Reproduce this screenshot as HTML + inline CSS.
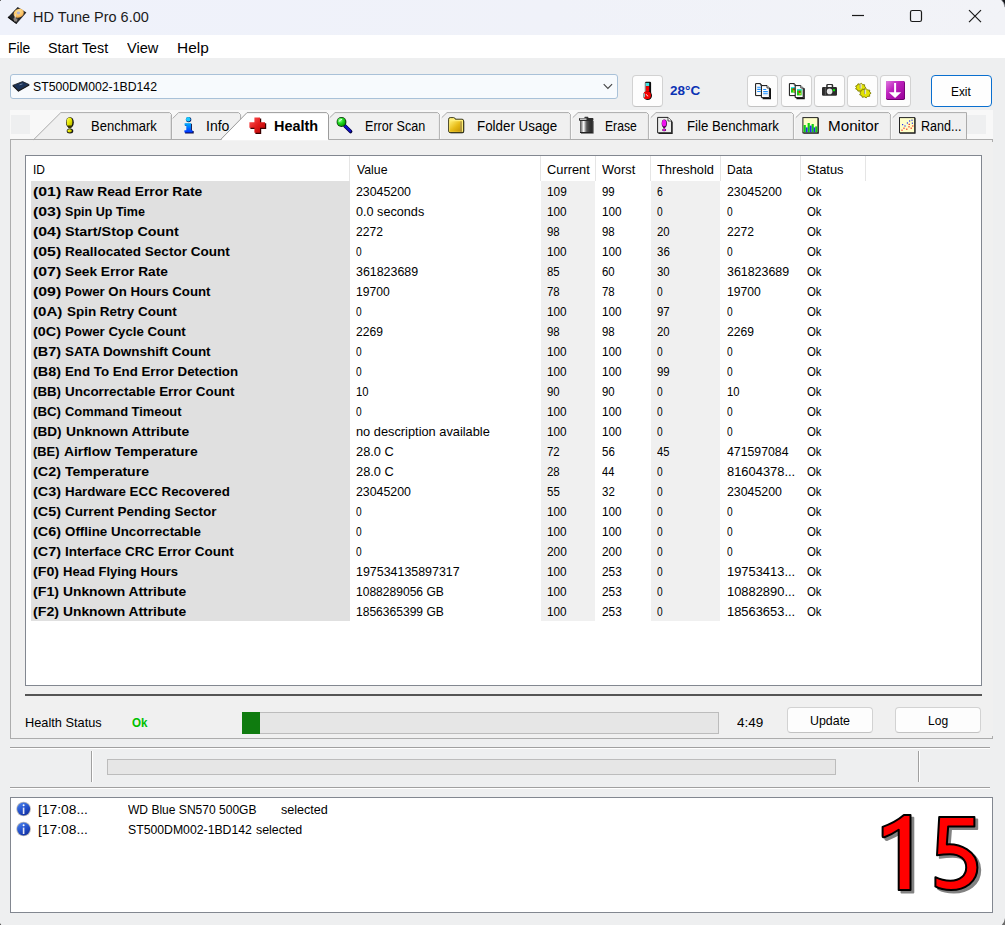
<!DOCTYPE html><html><head><meta charset="utf-8"><title>HD Tune Pro 6.00</title><style>
html,body{margin:0;padding:0}
body{width:1005px;height:925px;position:relative;overflow:hidden;background:#eeeff0;font-family:"Liberation Sans",sans-serif;color:#000}
.t{position:absolute;white-space:pre;line-height:20px;font-size:13px;transform-origin:0 0;display:block}
.s15{font-size:15px}.s14{font-size:14px}.b{font-weight:700}
.a{position:absolute;box-sizing:border-box}
.btn{position:absolute;box-sizing:border-box;background:#fdfdfd;border:1px solid #d2d2d2;border-bottom-color:#c2c2c2;border-radius:4px}
svg{position:absolute;overflow:visible}
</style></head><body>
<div class="a" style="left:0;top:0;width:1005px;height:35px;background:linear-gradient(90deg,#eff2fb 0%,#f0f2f9 55%,#f2f3f7 100%)"></div>
<div class="a" style="left:0;top:35px;width:1005px;height:23px;background:#fff"></div>
<svg style="left:985px;top:0" width="20" height="12" viewBox="0 0 20 12"><path d="M16.6 0Q19.3 2.4 20 7.2V0Z" fill="#14161a"/><path d="M16.6 0Q19.3 2.4 20 7.2" fill="none" stroke="#8a8c92" stroke-width="0.8"/></svg>
<div class="a" style="left:0;top:0;width:1px;height:1px;background:#666"></div>
<svg style="left:0;top:915px" width="8" height="10" viewBox="0 0 8 10"><path d="M0 8.2Q0.9 8.6 1.2 10H0Z" fill="#555"/></svg>
<svg style="left:995px;top:913px" width="10" height="12" viewBox="0 0 10 12"><path d="M10 5Q9.4 9.6 6.8 12H10Z" fill="#6a6a6a"/></svg>
<svg style="left:845px;top:0" width="160" height="35" viewBox="0 0 160 35"><g fill="none" stroke="#1a1a1a" stroke-width="1.2"><path d="M7 15.5H19"/><rect x="65.5" y="10.5" width="11" height="11" rx="1.8"/><path d="M124 10.2L136 22.2M136 10.2L124 22.2"/></g></svg>
<div class="a" style="left:10px;top:74px;width:608px;height:25px;background:#f7fafd;border:1px solid #a9c1d8;border-radius:3px"></div>
<svg style="left:603px;top:83px" width="10" height="7" viewBox="0 0 10 7"><path d="M0.7 1.2L4.9 5.4L9.1 1.2" fill="none" stroke="#444" stroke-width="1.1"/></svg>
<div class="btn" style="left:632px;top:75px;width:31px;height:32px"></div>
<div class="btn" style="left:747px;top:75px;width:31px;height:32px"></div>
<div class="btn" style="left:781px;top:75px;width:31px;height:32px"></div>
<div class="btn" style="left:814px;top:75px;width:31px;height:32px"></div>
<div class="btn" style="left:847px;top:75px;width:31px;height:32px"></div>
<div class="btn" style="left:880px;top:75px;width:31px;height:32px"></div>
<div class="btn" style="left:931px;top:75px;width:61px;height:32px;border-color:#0a6fcf;background:#fefefe"></div>
<div class="a" style="left:10px;top:110px;width:983px;height:29px;background:#f8f8f8"></div>
<div class="a" style="left:11px;top:115px;width:19px;height:19px;background:#eeeff0"></div>
<div class="a" style="left:967px;top:115px;width:19px;height:19px;background:#eeeff0"></div>
<div class="a" style="left:10px;top:139px;width:983px;height:600px;border:1px solid #acacac;border-right:none;background:#f0f0f0"></div>
<div class="a" style="left:992px;top:736px;width:1px;height:3px;background:#acacac"></div>
<div class="a" style="left:992px;top:139px;width:1px;height:3px;background:#acacac"></div>
<svg width="0" height="0" style="left:0;top:0"><defs>
<radialGradient id="gPlat" cx="0.55" cy="0.35" r="0.7"><stop offset="0" stop-color="#ffe796"/><stop offset="0.6" stop-color="#fbc468"/><stop offset="1" stop-color="#e89a3c"/></radialGradient>
<linearGradient id="gYel" x1="0" y1="0" x2="1" y2="1"><stop offset="0" stop-color="#ffff66"/><stop offset="0.5" stop-color="#e6e600"/><stop offset="1" stop-color="#a8a800"/></linearGradient>
<linearGradient id="gBlue" x1="0" y1="0" x2="0" y2="1"><stop offset="0" stop-color="#00b0ff"/><stop offset="1" stop-color="#0030ff"/></linearGradient>
<linearGradient id="gRed" x1="0" y1="0" x2="1" y2="1"><stop offset="0" stop-color="#ff5a5a"/><stop offset="0.5" stop-color="#e31b1b"/><stop offset="1" stop-color="#b00000"/></linearGradient>
<radialGradient id="gGreen" cx="0.35" cy="0.3" r="0.8"><stop offset="0" stop-color="#a0ffa0"/><stop offset="0.45" stop-color="#22dd22"/><stop offset="1" stop-color="#009000"/></radialGradient>
<linearGradient id="gFold" x1="0" y1="0" x2="1" y2="1"><stop offset="0" stop-color="#ffee70"/><stop offset="0.5" stop-color="#e8bc18"/><stop offset="1" stop-color="#c09000"/></linearGradient>
<linearGradient id="gCan" x1="0" y1="0" x2="1" y2="0"><stop offset="0" stop-color="#4a4a4a"/><stop offset="0.14" stop-color="#9a9a9a"/><stop offset="0.3" stop-color="#ffffff"/><stop offset="0.42" stop-color="#a0a0a0"/><stop offset="0.55" stop-color="#555"/><stop offset="0.8" stop-color="#333"/><stop offset="1" stop-color="#2a2a2a"/></linearGradient>
<linearGradient id="gPur" x1="0" y1="0" x2="1" y2="1"><stop offset="0" stop-color="#e07ae0"/><stop offset="0.4" stop-color="#bd22bd"/><stop offset="1" stop-color="#9a009a"/></linearGradient>
<linearGradient id="gInfo" x1="0.2" y1="0" x2="0.8" y2="1"><stop offset="0" stop-color="#4a80ea"/><stop offset="0.5" stop-color="#2452cc"/><stop offset="1" stop-color="#102c9c"/></linearGradient>
</defs></svg><svg style="left:0px;top:105px" width="1005" height="40" viewBox="0 0 1005 40"><path d="M221 35.2L247 8.5H326.5L328.5 10.5V35.2Z" fill="#fff"/><path d="M33.9 34L60.8 8H169.5L171.5 10V34Z" fill="#f0f0f0"/><path d="M172.5 34V14L179 8H238.5L240.8 10.2V14.5L221.3 34Z" fill="#f0f0f0"/><path d="M329 34V13L335 8H437.5L439.5 10V34Z" fill="#f0f0f0"/><path d="M441 34V13L447 8H568.5L570.5 10V34Z" fill="#f0f0f0"/><path d="M572 34V13L578 8H646.5L648.5 10V34Z" fill="#f0f0f0"/><path d="M650 34V13L656 8H791.5L793.5 10V34Z" fill="#f0f0f0"/><path d="M795 34V13L801 8H888.5L890.5 10V34Z" fill="#f0f0f0"/><path d="M892 34V13L898 8H967V34Z" fill="#f0f0f0"/><path d="M33.7 34.6L60.8 7.6H169.6L171.5 9.5V34" fill="none" stroke="#ababab" stroke-width="1"/><path d="M172.6 13.5L178.6 7.6H238.6L240.6 9.6V14.4" fill="none" stroke="#ababab" stroke-width="1"/><path d="M220.6 34.6L247 7.6H326.4L328.5 9.7V34.5" fill="none" stroke="#9c9c9c" stroke-width="1"/><path d="M329.8 12.6L335 7.6H437.6L439.5 9.5V34" fill="none" stroke="#ababab" stroke-width="1"/><path d="M441.8 12.6L447 7.6H568.6L570.5 9.5V34" fill="none" stroke="#ababab" stroke-width="1"/><path d="M572.8 12.6L578 7.6H646.6L648.5 9.5V34" fill="none" stroke="#ababab" stroke-width="1"/><path d="M650.8 12.6L656 7.6H791.6L793.5 9.5V34" fill="none" stroke="#ababab" stroke-width="1"/><path d="M795.8 12.6L801 7.6H888.6L890.5 9.5V34" fill="none" stroke="#ababab" stroke-width="1"/><path d="M892.8 12.6L898 7.6H966.5V34" fill="none" stroke="#ababab" stroke-width="1"/><path d="M170.8 10.4V34" stroke="#c4c4c4" stroke-width="0.6"/><path d="M439.3 10.4V34" stroke="#c4c4c4" stroke-width="0.6"/><path d="M570.3 10.4V34" stroke="#c4c4c4" stroke-width="0.6"/><path d="M648.3 10.4V34" stroke="#c4c4c4" stroke-width="0.6"/><path d="M793.3 10.4V34" stroke="#c4c4c4" stroke-width="0.6"/><path d="M890.3 10.4V34" stroke="#c4c4c4" stroke-width="0.6"/></svg>
<div class="a" style="left:25px;top:155px;width:957px;height:531px;border:1px solid #828790;background:#fff"></div>
<div class="a" style="left:31px;top:181px;width:319px;height:440px;background:#e0e0e0"></div>
<div class="a" style="left:541px;top:181px;width:54px;height:440px;background:#f0f0f0"></div>
<div class="a" style="left:651px;top:181px;width:69px;height:440px;background:#f0f0f0"></div>
<div class="a" style="left:349px;top:156px;width:1px;height:25px;background:#e5e5e5"></div>
<div class="a" style="left:540px;top:156px;width:1px;height:25px;background:#e5e5e5"></div>
<div class="a" style="left:595px;top:156px;width:1px;height:25px;background:#e5e5e5"></div>
<div class="a" style="left:650px;top:156px;width:1px;height:25px;background:#e5e5e5"></div>
<div class="a" style="left:720px;top:156px;width:1px;height:25px;background:#e5e5e5"></div>
<div class="a" style="left:800px;top:156px;width:1px;height:25px;background:#e5e5e5"></div>
<div class="a" style="left:865px;top:156px;width:1px;height:25px;background:#e5e5e5"></div>
<div class="a" style="left:25px;top:694px;width:957px;height:2px;background:#555"></div>
<div class="a" style="left:242px;top:712px;width:477px;height:22px;background:#e6e6e6;border:1px solid #bcbcbc"></div>
<div class="a" style="left:242px;top:712px;width:18px;height:22px;background:#0f7b0f"></div>
<div class="btn" style="left:787px;top:707px;width:86px;height:26px"></div>
<div class="btn" style="left:895px;top:707px;width:86px;height:26px"></div>
<div class="a" style="left:10px;top:747px;width:980px;height:2px;background:#fff;border-top:1px solid #a0a0a0"></div>
<div class="a" style="left:10px;top:787px;width:980px;height:2px;background:#fff;border-top:1px solid #a0a0a0"></div>
<div class="a" style="left:91px;top:751px;width:2px;height:31px;background:#fff;border-left:1px solid #a0a0a0"></div>
<div class="a" style="left:918px;top:751px;width:2px;height:31px;background:#fff;border-left:1px solid #a0a0a0"></div>
<div class="a" style="left:107px;top:759px;width:729px;height:16px;background:#e6e6e6;border:1px solid #bcbcbc"></div>
<div class="a" style="left:10px;top:797px;width:983px;height:116px;border:1px solid #828790;background:#fff"></div>
<svg style="left:0px;top:0px" width="40" height="35" viewBox="0 0 40 35">
<polygon points="17.7,7.0 26.4,12.6 16.4,24.1 7.7,17.4" fill="#26282b"/>
<polygon points="7.7,17.4 16.4,24.1 16.6,23.0 8.6,16.6" fill="#111"/>
<ellipse cx="18.7" cy="13.3" rx="5.3" ry="4.3" transform="rotate(-28 18.7 13.3)" fill="url(#gPlat)"/>
<ellipse cx="18.4" cy="13.0" rx="1.7" ry="1.4" fill="#b4b2cc"/>
<path d="M15.4 14.2L15.0 19.2" stroke="#e8e0d0" stroke-width="1"/>
<path d="M13.2 18.6L17.6 18.6L17.0 21.4L14.4 21.4Z" fill="#8e857f"/>
</svg><svg style="left:0px;top:70px" width="40" height="30" viewBox="0 0 40 30">
<polygon points="12.8,15.4 22.6,11.6 29.2,14.6 18.4,20.8" fill="#1b3358" stroke="#20242a" stroke-width="0.9" stroke-linejoin="round"/>
<path d="M12.8 15.6L18.4 21.0L29.2 14.9" fill="none" stroke="#17191c" stroke-width="1.2"/>
<path d="M19.5 14.8L22.5 13.9" stroke="#8fa0bb" stroke-width="0.7"/>
</svg><svg style="left:632px;top:75px" width="31" height="32" viewBox="0 0 31 32">
<rect x="12.9" y="6.8" width="6.2" height="14" rx="1.2" fill="#0c0c0c"/>
<rect x="12.9" y="7.6" width="1" height="11" fill="#9a9a9a"/>
<rect x="13.9" y="7.9" width="3.3" height="3.2" fill="#3ee4e4"/>
<rect x="13.9" y="11.1" width="3.3" height="9" fill="#f40000"/>
<circle cx="15.7" cy="20.6" r="4.3" fill="#0c0c0c"/>
<circle cx="15.1" cy="20.2" r="3.9" fill="#f20000"/>
<rect x="11.2" y="18.4" width="1.6" height="3.8" fill="#7aeaea"/>
<rect x="11.0" y="18.2" width="0.7" height="4.4" fill="#888"/>
<path d="M14.2 19.2Q14.6 20.9 16.2 21.1" fill="none" stroke="#fff" stroke-width="0.9"/>
</svg><svg style="left:747px;top:75px" width="31" height="32" viewBox="0 0 31 32"><path d="M8.6 8.6H13.4L15.0 10.2V20.6H8.6Z" fill="#fdfdfd" stroke="#111" stroke-width="1" stroke-linejoin="miter"/><path d="M13.4 8.6V10.2H15.0" fill="#fff" stroke="#111" stroke-width="0.8"/><path d="M23.299999999999997 13.2V23.5H15.6" fill="none" stroke="#111" stroke-width="1.4"/><path d="M14.4 10.6H20.0L22.4 13.0V22.6H14.4Z" fill="#fdfdfd" stroke="#111" stroke-width="1" stroke-linejoin="miter"/><path d="M20.0 10.6V13.0H22.4" fill="#fff" stroke="#111" stroke-width="0.8"/><g stroke="#1e90ff" stroke-width="1.1"><path d="M10.2 12.3H13.8M10.2 14.4H13.8M10.2 16.5H13.8"/><path d="M16.2 14.5H19.2M16.2 16.6H20.8M16.2 18.7H20.8"/></g><g stroke="#e4e4e4" stroke-width="0.6"><path d="M16.2 20.6H20.8"/></g></svg><svg style="left:781px;top:75px" width="31" height="32" viewBox="0 0 31 32"><path d="M8.4 8.6H13.200000000000001L14.8 10.2V20.6H8.4Z" fill="#fdfdfd" stroke="#111" stroke-width="1" stroke-linejoin="miter"/><path d="M13.200000000000001 8.6V10.2H14.8" fill="#fff" stroke="#111" stroke-width="0.8"/><rect x="10.0" y="12.0" width="4.6" height="5.6" fill="#18d018"/><rect x="10.0" y="12.0" width="4.6" height="1.2" fill="#30d8f0"/><circle cx="12.53" cy="14.352" r="1" fill="#e81010"/><rect x="12.3" y="15.36" width="1.6" height="1.6" fill="#e8d020"/><path d="M23.099999999999998 13.2V23.5H15.399999999999999" fill="none" stroke="#111" stroke-width="1.4"/><path d="M14.2 10.6H19.8L22.2 13.0V22.6H14.2Z" fill="#fdfdfd" stroke="#111" stroke-width="1" stroke-linejoin="miter"/><path d="M19.8 10.6V13.0H22.2" fill="#fff" stroke="#111" stroke-width="0.8"/><rect x="16.0" y="14.2" width="4.6" height="6.2" fill="#18d018"/><rect x="16.0" y="14.2" width="4.6" height="1.2" fill="#30d8f0"/><circle cx="18.53" cy="16.804" r="1" fill="#e81010"/><rect x="18.3" y="17.919999999999998" width="1.6" height="1.6" fill="#e8d020"/></svg><svg style="left:814px;top:75px" width="31" height="32" viewBox="0 0 31 32">
<rect x="12.2" y="9" width="7" height="4" rx="1.4" fill="#2c2c2c"/>
<rect x="13.6" y="10" width="4.2" height="2.2" rx="0.8" fill="#fafafa"/>
<rect x="8" y="12" width="15" height="8.8" rx="1.2" fill="#2b2b2b"/>
<rect x="10.9" y="12.4" width="0.7" height="8" fill="#6a6a6a"/>
<circle cx="15.6" cy="16.4" r="2.8" fill="#e9e9e9"/>
<rect x="18.9" y="14.1" width="2.1" height="2.1" fill="#00e400"/>
</svg><svg style="left:847px;top:75px" width="31" height="32" viewBox="0 0 31 32"><polygon points="18.90,12.50 17.48,13.63 17.66,15.23 15.67,15.36 14.52,16.68 12.88,15.76 10.95,16.17 10.43,14.63 8.62,13.95 9.47,12.50 8.62,11.05 10.43,10.37 10.95,8.83 12.88,9.24 14.52,8.32 15.67,9.64 17.66,9.77 17.48,11.37" fill="#e2e200" stroke="#7c7c00" stroke-width="0.9" stroke-linejoin="round"/><rect x="12.7" y="8.9" width="1.0" height="4.6" fill="#8a8abc"/><rect x="13.7" y="8.9" width="0.8" height="4.6" fill="#f4f4ff"/><polygon points="24.10,18.20 22.52,19.46 22.72,21.23 20.50,21.39 19.22,22.85 17.40,21.83 15.25,22.29 14.67,20.57 12.66,19.81 13.60,18.20 12.66,16.59 14.67,15.83 15.25,14.11 17.40,14.57 19.22,13.55 20.50,15.01 22.72,15.17 22.52,16.94" fill="#e2e200" stroke="#7c7c00" stroke-width="0.9" stroke-linejoin="round"/><rect x="17.3" y="14.6" width="1.0" height="4.6" fill="#8a8abc"/><rect x="18.3" y="14.6" width="0.8" height="4.6" fill="#f4f4ff"/></svg><svg style="left:880px;top:75px" width="31" height="32" viewBox="0 0 31 32">
<rect x="6" y="5.9" width="19" height="19" rx="1.6" fill="#6a006a"/>
<rect x="6" y="5.9" width="18.2" height="18.2" rx="1.4" fill="url(#gPur)"/>
<path d="M14.1 8H16.1V17.3H21.2L15.1 23.1L8.8 17.3H14.1Z" fill="#fff"/>
</svg><svg style="left:0px;top:105px" width="1005" height="40" viewBox="0 0 1005 40"><g><ellipse cx="69.9" cy="17.4" rx="3.9" ry="5.5" fill="#161616"/><ellipse cx="69.5" cy="17.1" rx="2.9" ry="4.5" fill="url(#gYel)"/>
<path d="M67.6 20.5L71.9 20.5L71.2 23.2L68.4 23.2Z" fill="#3a3a00"/>
<ellipse cx="70.0" cy="26.1" rx="3.3" ry="2.5" fill="#161616"/><ellipse cx="69.6" cy="25.8" rx="2.3" ry="1.6" fill="url(#gYel)"/></g><g><circle cx="188.6" cy="14.6" r="2.7" fill="#0a1a60"/><circle cx="188.2" cy="14.3" r="2.3" fill="#19c8ff"/>
<path d="M184.6 18.2H191.2V25.4H193V27.9H184.4V25.4H186.3V20.6H184.6Z" fill="#0a0a40" transform="translate(0.7,0.5)"/>
<path d="M184.6 18.2H191.0V25.2H192.6V27.5H184.4V25.2H186.3V20.4H184.6Z" fill="url(#gBlue)"/></g><g><path d="M254.6 12.6H260.4V17.4H265.4V23.2H260.4V28.2H254.6V23.2H249.6V17.4H254.6Z" fill="#3a0000" transform="translate(0.8,0.8)"/>
<path d="M254.4 12.4H260V17.2H265V22.8H260V27.8H254.4V22.8H249.4V17.2H254.4Z" fill="url(#gRed)"/></g><g><path d="M345 21L350.6 26.6" stroke="#000040" stroke-width="3.6" stroke-linecap="round"/><path d="M344.8 20.6L350.2 26" stroke="#1010c8" stroke-width="2.2" stroke-linecap="round"/>
<circle cx="341.5" cy="17" r="4.9" fill="#0c300c"/><circle cx="341.4" cy="16.9" r="4.1" fill="url(#gGreen)"/><path d="M339.2 16.6Q339.8 14.6 342 14.2" stroke="#eaffea" stroke-width="1" fill="none"/></g><g><path d="M448.6 14.2Q448.6 12.6 450.2 12.6H453.6Q455 12.6 455.4 14.2H462Q463.6 14.2 463.6 15.8V26Q463.6 27.6 462 27.6H450.2Q448.6 27.6 448.6 26Z" fill="#222" transform="translate(0.6,0.6)"/>
<path d="M448.6 14.2Q448.6 12.6 450.2 12.6H453.6Q455 12.6 455.4 14.2H462Q463.6 14.2 463.6 15.8V26Q463.6 27.6 462 27.6H450.2Q448.6 27.6 448.6 26Z" fill="#ffef78" stroke="#2a2a10" stroke-width="0.9"/>
<rect x="449.6" y="16.2" width="12.4" height="10.6" fill="url(#gFold)"/><rect x="460.6" y="16.2" width="0.8" height="10.6" fill="#8a8a8a"/></g><g><rect x="581" y="16" width="12.6" height="12.6" fill="#222" opacity="0.85"/>
<rect x="580" y="15.6" width="12.4" height="12.2" fill="url(#gCan)"/>
<rect x="584.4" y="11.8" width="4" height="1.6" rx="0.6" fill="#333"/>
<rect x="579" y="12.9" width="14.4" height="3" rx="0.8" fill="#2c2c2c"/><rect x="580" y="13.5" width="6.5" height="1.3" fill="#e4e4e4"/>
<rect x="580" y="27" width="12.4" height="1" fill="#222"/></g><g><path d="M658 12.8H668.4L672.2 16.4V28.4H658Z" fill="#222" transform="translate(0.5,0.5)"/>
<path d="M657.6 12.4H668L671.6 16V27.8H657.6Z" fill="#ececec" stroke="#222" stroke-width="1"/><path d="M668 12.4V16H671.6" fill="#fff" stroke="#222" stroke-width="0.8"/>
<ellipse cx="664.3" cy="18.4" rx="2.6" ry="3.9" fill="#380038"/><ellipse cx="664.1" cy="18.2" rx="2.1" ry="3.4" fill="#ee10ee"/>
<path d="M662.9 21.4H665.5L665 23.4H663.4Z" fill="#500050"/>
<ellipse cx="664.2" cy="25" rx="2" ry="1.3" fill="#380038"/><ellipse cx="664.1" cy="24.9" rx="1.5" ry="0.9" fill="#ee10ee"/></g><g><rect x="802.9" y="12.6" width="15.4" height="15.6" fill="#222" transform="translate(0.5,0.5)"/><rect x="802.9" y="12.6" width="15" height="15.2" fill="#ffffc8" stroke="#222" stroke-width="1"/>
<g fill="#10d010"><rect x="803.6" y="20" width="2.2" height="7.2"/><rect x="807.6" y="18" width="2.2" height="9.2"/><rect x="811.6" y="19" width="2.2" height="8.2"/><rect x="815.2" y="21.4" width="2" height="5.8"/></g>
<g fill="#2030e0"><rect x="805.8" y="22.4" width="1.8" height="4.8"/><rect x="809.8" y="20.6" width="1.8" height="6.6"/><rect x="813.6" y="22.4" width="1.6" height="4.8"/></g></g><g><rect x="899.5" y="12.6" width="15.6" height="15.6" fill="#222" transform="translate(0.5,0.5)"/><rect x="899.5" y="12.6" width="15.2" height="15.2" fill="#ffffc8" stroke="#222" stroke-width="1"/>
<g fill="#2030f0"><rect x="909" y="15.4" width="1.2" height="1.2"/><rect x="911.4" y="14.6" width="1.2" height="1.2"/><rect x="906.8" y="17.4" width="1.2" height="1.2"/><rect x="902" y="19" width="1.2" height="1.2"/><rect x="904.4" y="20.4" width="1.2" height="1.2"/><rect x="911.8" y="17.6" width="1.2" height="1.2"/></g>
<g fill="#f01010"><rect x="901.4" y="24.6" width="1.2" height="1.2"/><rect x="903.4" y="22.6" width="1.2" height="1.2"/><rect x="906.2" y="23.6" width="1.2" height="1.2"/><rect x="908.4" y="21.2" width="1.2" height="1.2"/><rect x="910.6" y="22.6" width="1.2" height="1.2"/><rect x="912.2" y="20.4" width="1.2" height="1.2"/><rect x="908.6" y="18.8" width="1.2" height="1.2"/></g></g></svg><svg style="left:15px;top:800px" width="18" height="18" viewBox="0 0 18 18"><circle cx="8.6" cy="9" r="7.3" fill="#b9b9b9"/><circle cx="8.6" cy="9" r="6.5" fill="url(#gInfo)"/>
<circle cx="8.6" cy="5.2" r="1" fill="#fff"/><rect x="7.8" y="7.6" width="1.6" height="6.4" fill="#e9e9f4"/></svg><svg style="left:15px;top:820px" width="18" height="18" viewBox="0 0 18 18"><circle cx="8.6" cy="9" r="7.3" fill="#b9b9b9"/><circle cx="8.6" cy="9" r="6.5" fill="url(#gInfo)"/>
<circle cx="8.6" cy="5.2" r="1" fill="#fff"/><rect x="7.8" y="7.6" width="1.6" height="6.4" fill="#e9e9f4"/></svg><svg style="left:870px;top:805px" width="125" height="100" viewBox="870 805 125 100"><g transform="translate(2.8,2.6)" fill="#828282" stroke="#828282" stroke-width="2" stroke-linejoin="round"><path d="M882.6 826.9Q895.2 822.6 903.9 815.1H910.5V890H898.7V829.8Q892.4 834.2 884.4 837.3Q882.6 837.6 882.6 836Z"/><path d="M939.2 817H974.4V826.4H948.2L946.8 844.4C960 843.6 977.4 851 977.4 867.5C977.4 882 965 890 951 890C944.5 890 939 888.6 935.4 886.4V877.2C940 879.6 945.5 880.8 950.5 880.8C960 880.8 966.2 875.4 966.2 867.5C966.2 859.5 960 854.2 950 854.2C945.5 854.2 941 854.6 937 855.2Z"/></g><g fill="#ff0000" stroke="#000" stroke-width="2" stroke-linejoin="round"><path d="M882.6 826.9Q895.2 822.6 903.9 815.1H910.5V890H898.7V829.8Q892.4 834.2 884.4 837.3Q882.6 837.6 882.6 836Z"/><path d="M939.2 817H974.4V826.4H948.2L946.8 844.4C960 843.6 977.4 851 977.4 867.5C977.4 882 965 890 951 890C944.5 890 939 888.6 935.4 886.4V877.2C940 879.6 945.5 880.8 950.5 880.8C960 880.8 966.2 875.4 966.2 867.5C966.2 859.5 960 854.2 950 854.2C945.5 854.2 941 854.6 937 855.2Z"/></g></svg>
<span class="t s15" style="left:33.35px;top:7px;transform:scaleX(0.9641);color:#1b1b1b">HD Tune Pro 6.00</span>
<span class="t s15" style="left:8.01px;top:38px;transform:scaleX(0.9196)">File</span>
<span class="t s15" style="left:47.96px;top:38px;transform:scaleX(0.9535)">Start Test</span>
<span class="t s15" style="left:127.26px;top:38px;transform:scaleX(0.9718)">View</span>
<span class="t s15" style="left:177.37px;top:38px;transform:scaleX(1.0277)">Help</span>
<span class="t" style="left:33px;top:77px;transform:scaleX(0.9428)">ST500DM002-1BD142</span>
<span class="t b" style="left:670.08px;top:81px;transform:scaleX(1.0372);color:#0a32b4">28°C</span>
<span class="t" style="left:951.37px;top:82px;transform:scaleX(0.9135)">Exit</span>
<span class="t s14" style="left:91.04px;top:116px;transform:scaleX(0.9300)">Benchmark</span>
<span class="t s14" style="left:206.24px;top:116px;transform:scaleX(1.0018)">Info</span>
<span class="t s14 b" style="left:274.02px;top:116px;transform:scaleX(1.0317)">Health</span>
<span class="t s14" style="left:365.08px;top:116px;transform:scaleX(0.9003)">Error Scan</span>
<span class="t s14" style="left:477.21px;top:116px;transform:scaleX(0.9547)">Folder Usage</span>
<span class="t s14" style="left:605.12px;top:116px;transform:scaleX(0.8690)">Erase</span>
<span class="t s14" style="left:687.12px;top:116px;transform:scaleX(0.9458)">File Benchmark</span>
<span class="t s14" style="left:828.44px;top:116px;transform:scaleX(1.0871)">Monitor</span>
<span class="t s14" style="left:920.88px;top:116px;transform:scaleX(0.8960)">Rand...</span>
<span class="t" style="left:32.6px;top:160px;transform:scaleX(0.9227)">ID</span>
<span class="t" style="left:357.37px;top:160px;transform:scaleX(0.9444)">Value</span>
<span class="t" style="left:547.32px;top:160px;transform:scaleX(0.9857)">Current</span>
<span class="t" style="left:602.31px;top:160px;transform:scaleX(0.9849)">Worst</span>
<span class="t" style="left:657.35px;top:160px;transform:scaleX(0.9849)">Threshold</span>
<span class="t" style="left:727.15px;top:160px;transform:scaleX(0.9258)">Data</span>
<span class="t" style="left:807.26px;top:160px;transform:scaleX(0.9924)">Status</span>
<span class="t b" style="left:33.37px;top:182px;transform:scaleX(1.2202)">(01)</span>
<span class="t b" style="left:65.42px;top:182px;transform:scaleX(1.0616)">Raw Read Error Rate</span>
<span class="t" style="left:355.95px;top:182px;transform:scaleX(0.9499)">23045200</span>
<span class="t" style="left:546.99px;top:182px;transform:scaleX(0.9095)">109</span>
<span class="t" style="left:602.39px;top:182px;transform:scaleX(0.8801)">99</span>
<span class="t" style="left:657.35px;top:182px;transform:scaleX(0.8063)">6</span>
<span class="t" style="left:727.35px;top:182px;transform:scaleX(0.9499)">23045200</span>
<span class="t" style="left:807.43px;top:182px;transform:scaleX(0.8707)">Ok</span>
<span class="t b" style="left:33.37px;top:202px;transform:scaleX(1.2202)">(03)</span>
<span class="t b" style="left:64.98px;top:202px;transform:scaleX(0.9659)">Spin Up Time</span>
<span class="t" style="left:356.04px;top:202px;transform:scaleX(0.9731)">0.0 seconds</span>
<span class="t" style="left:547px;top:202px;transform:scaleX(0.9053)">100</span>
<span class="t" style="left:601.9px;top:202px;transform:scaleX(0.9053)">100</span>
<span class="t" style="left:657.45px;top:202px;transform:scaleX(0.7831)">0</span>
<span class="t" style="left:726.95px;top:202px;transform:scaleX(0.7831)">0</span>
<span class="t" style="left:807.43px;top:202px;transform:scaleX(0.8707)">Ok</span>
<span class="t b" style="left:33.37px;top:222px;transform:scaleX(1.2202)">(04)</span>
<span class="t b" style="left:65.48px;top:222px;transform:scaleX(1.1014)">Start/Stop Count</span>
<span class="t" style="left:355.97px;top:222px;transform:scaleX(0.9300)">2272</span>
<span class="t" style="left:547.49px;top:222px;transform:scaleX(0.8793)">98</span>
<span class="t" style="left:602.39px;top:222px;transform:scaleX(0.8793)">98</span>
<span class="t" style="left:657.3px;top:222px;transform:scaleX(0.8762)">20</span>
<span class="t" style="left:727.37px;top:222px;transform:scaleX(0.9300)">2272</span>
<span class="t" style="left:807.43px;top:222px;transform:scaleX(0.8707)">Ok</span>
<span class="t b" style="left:33.37px;top:242px;transform:scaleX(1.2202)">(05)</span>
<span class="t b" style="left:65.44px;top:242px;transform:scaleX(1.0420)">Reallocated Sector Count</span>
<span class="t" style="left:356.15px;top:242px;transform:scaleX(0.7831)">0</span>
<span class="t" style="left:547px;top:242px;transform:scaleX(0.9053)">100</span>
<span class="t" style="left:601.9px;top:242px;transform:scaleX(0.9053)">100</span>
<span class="t" style="left:657.25px;top:242px;transform:scaleX(0.8829)">36</span>
<span class="t" style="left:726.95px;top:242px;transform:scaleX(0.7831)">0</span>
<span class="t" style="left:807.43px;top:242px;transform:scaleX(0.8707)">Ok</span>
<span class="t b" style="left:33.37px;top:262px;transform:scaleX(1.2202)">(07)</span>
<span class="t b" style="left:64.92px;top:262px;transform:scaleX(1.0549)">Seek Error Rate</span>
<span class="t" style="left:355.9px;top:262px;transform:scaleX(0.9547)">361823689</span>
<span class="t" style="left:546.95px;top:262px;transform:scaleX(0.8760)">85</span>
<span class="t" style="left:602.4px;top:262px;transform:scaleX(0.8762)">60</span>
<span class="t" style="left:657.25px;top:262px;transform:scaleX(0.8798)">30</span>
<span class="t" style="left:727.3px;top:262px;transform:scaleX(0.9547)">361823689</span>
<span class="t" style="left:807.43px;top:262px;transform:scaleX(0.8707)">Ok</span>
<span class="t b" style="left:33.37px;top:282px;transform:scaleX(1.2202)">(09)</span>
<span class="t b" style="left:65.46px;top:282px;transform:scaleX(1.0170)">Power On Hours Count</span>
<span class="t" style="left:356.07px;top:282px;transform:scaleX(0.9333)">19700</span>
<span class="t" style="left:546.9px;top:282px;transform:scaleX(0.8785)">78</span>
<span class="t" style="left:602.4px;top:282px;transform:scaleX(0.8785)">78</span>
<span class="t" style="left:657.45px;top:282px;transform:scaleX(0.7831)">0</span>
<span class="t" style="left:727.47px;top:282px;transform:scaleX(0.9333)">19700</span>
<span class="t" style="left:807.43px;top:282px;transform:scaleX(0.8707)">Ok</span>
<span class="t b" style="left:33.41px;top:302px;transform:scaleX(1.1608)">(0A)</span>
<span class="t b" style="left:66.83px;top:302px;transform:scaleX(1.0344)">Spin Retry Count</span>
<span class="t" style="left:356.15px;top:302px;transform:scaleX(0.7831)">0</span>
<span class="t" style="left:547px;top:302px;transform:scaleX(0.9053)">100</span>
<span class="t" style="left:601.9px;top:302px;transform:scaleX(0.9053)">100</span>
<span class="t" style="left:657.29px;top:302px;transform:scaleX(0.8801)">97</span>
<span class="t" style="left:726.95px;top:302px;transform:scaleX(0.7831)">0</span>
<span class="t" style="left:807.43px;top:302px;transform:scaleX(0.8707)">Ok</span>
<span class="t b" style="left:33.44px;top:322px;transform:scaleX(1.1067)">(0C)</span>
<span class="t b" style="left:65.46px;top:322px;transform:scaleX(1.0194)">Power Cycle Count</span>
<span class="t" style="left:355.97px;top:322px;transform:scaleX(0.9300)">2269</span>
<span class="t" style="left:547.49px;top:322px;transform:scaleX(0.8793)">98</span>
<span class="t" style="left:602.39px;top:322px;transform:scaleX(0.8793)">98</span>
<span class="t" style="left:657.3px;top:322px;transform:scaleX(0.8762)">20</span>
<span class="t" style="left:727.37px;top:322px;transform:scaleX(0.9300)">2269</span>
<span class="t" style="left:807.43px;top:322px;transform:scaleX(0.8707)">Ok</span>
<span class="t b" style="left:33.44px;top:342px;transform:scaleX(1.1067)">(B7)</span>
<span class="t b" style="left:64.93px;top:342px;transform:scaleX(1.0358)">SATA Downshift Count</span>
<span class="t" style="left:356.15px;top:342px;transform:scaleX(0.7831)">0</span>
<span class="t" style="left:547px;top:342px;transform:scaleX(0.9053)">100</span>
<span class="t" style="left:601.9px;top:342px;transform:scaleX(0.9053)">100</span>
<span class="t" style="left:657.45px;top:342px;transform:scaleX(0.7831)">0</span>
<span class="t" style="left:726.95px;top:342px;transform:scaleX(0.7831)">0</span>
<span class="t" style="left:807.43px;top:342px;transform:scaleX(0.8707)">Ok</span>
<span class="t b" style="left:33.44px;top:362px;transform:scaleX(1.1067)">(B8)</span>
<span class="t b" style="left:65.46px;top:362px;transform:scaleX(1.0210)">End To End Error Detection</span>
<span class="t" style="left:356.15px;top:362px;transform:scaleX(0.7831)">0</span>
<span class="t" style="left:547px;top:362px;transform:scaleX(0.9053)">100</span>
<span class="t" style="left:601.9px;top:362px;transform:scaleX(0.9053)">100</span>
<span class="t" style="left:657.29px;top:362px;transform:scaleX(0.8801)">99</span>
<span class="t" style="left:726.95px;top:362px;transform:scaleX(0.7831)">0</span>
<span class="t" style="left:807.43px;top:362px;transform:scaleX(0.8707)">Ok</span>
<span class="t b" style="left:32.9px;top:382px;transform:scaleX(1.0217)">(BB)</span>
<span class="t b" style="left:64.91px;top:382px;transform:scaleX(1.0340)">Uncorrectable Error Count</span>
<span class="t" style="left:356.13px;top:382px;transform:scaleX(0.8671)">10</span>
<span class="t" style="left:547.49px;top:382px;transform:scaleX(0.8770)">90</span>
<span class="t" style="left:602.39px;top:382px;transform:scaleX(0.8770)">90</span>
<span class="t" style="left:657.45px;top:382px;transform:scaleX(0.7831)">0</span>
<span class="t" style="left:726.93px;top:382px;transform:scaleX(0.8671)">10</span>
<span class="t" style="left:807.43px;top:382px;transform:scaleX(0.8707)">Ok</span>
<span class="t b" style="left:32.9px;top:402px;transform:scaleX(1.0217)">(BC)</span>
<span class="t b" style="left:65.13px;top:402px;transform:scaleX(0.9917)">Command Timeout</span>
<span class="t" style="left:356.15px;top:402px;transform:scaleX(0.7831)">0</span>
<span class="t" style="left:547px;top:402px;transform:scaleX(0.9053)">100</span>
<span class="t" style="left:601.9px;top:402px;transform:scaleX(0.9053)">100</span>
<span class="t" style="left:657.45px;top:402px;transform:scaleX(0.7831)">0</span>
<span class="t" style="left:726.95px;top:402px;transform:scaleX(0.7831)">0</span>
<span class="t" style="left:807.43px;top:402px;transform:scaleX(0.8707)">Ok</span>
<span class="t b" style="left:33.49px;top:422px;transform:scaleX(1.0409)">(BD)</span>
<span class="t b" style="left:65.99px;top:422px;transform:scaleX(1.0632)">Unknown Attribute</span>
<span class="t" style="left:356.38px;top:422px;transform:scaleX(0.9850)">no description available</span>
<span class="t" style="left:547px;top:422px;transform:scaleX(0.9053)">100</span>
<span class="t" style="left:601.9px;top:422px;transform:scaleX(0.9053)">100</span>
<span class="t" style="left:657.45px;top:422px;transform:scaleX(0.7831)">0</span>
<span class="t" style="left:726.95px;top:422px;transform:scaleX(0.7831)">0</span>
<span class="t" style="left:807.43px;top:422px;transform:scaleX(0.8707)">Ok</span>
<span class="t b" style="left:32.92px;top:442px;transform:scaleX(0.9919)">(BE)</span>
<span class="t b" style="left:63.94px;top:442px;transform:scaleX(1.0656)">Airflow Temperature</span>
<span class="t" style="left:355.93px;top:442px;transform:scaleX(0.9869)">28.0 C</span>
<span class="t" style="left:546.9px;top:442px;transform:scaleX(0.8793)">72</span>
<span class="t" style="left:602.32px;top:442px;transform:scaleX(0.8850)">56</span>
<span class="t" style="left:656.99px;top:442px;transform:scaleX(0.8585)">45</span>
<span class="t" style="left:727.06px;top:442px;transform:scaleX(0.9455)">471597084</span>
<span class="t" style="left:807.43px;top:442px;transform:scaleX(0.8707)">Ok</span>
<span class="t b" style="left:33.44px;top:462px;transform:scaleX(1.1067)">(C2)</span>
<span class="t b" style="left:65.46px;top:462px;transform:scaleX(1.0791)">Temperature</span>
<span class="t" style="left:355.93px;top:462px;transform:scaleX(0.9869)">28.0 C</span>
<span class="t" style="left:546.9px;top:462px;transform:scaleX(0.8785)">28</span>
<span class="t" style="left:602.1px;top:462px;transform:scaleX(0.8495)">44</span>
<span class="t" style="left:657.45px;top:462px;transform:scaleX(0.7831)">0</span>
<span class="t" style="left:727.37px;top:462px;transform:scaleX(0.9930)">81604378...</span>
<span class="t" style="left:807.43px;top:462px;transform:scaleX(0.8707)">Ok</span>
<span class="t b" style="left:33.44px;top:482px;transform:scaleX(1.1067)">(C3)</span>
<span class="t b" style="left:65.45px;top:482px;transform:scaleX(1.0277)">Hardware ECC Recovered</span>
<span class="t" style="left:355.95px;top:482px;transform:scaleX(0.9499)">23045200</span>
<span class="t" style="left:547.42px;top:482px;transform:scaleX(0.8850)">55</span>
<span class="t" style="left:602.35px;top:482px;transform:scaleX(0.8829)">32</span>
<span class="t" style="left:657.45px;top:482px;transform:scaleX(0.7831)">0</span>
<span class="t" style="left:727.35px;top:482px;transform:scaleX(0.9499)">23045200</span>
<span class="t" style="left:807.43px;top:482px;transform:scaleX(0.8707)">Ok</span>
<span class="t b" style="left:33.44px;top:502px;transform:scaleX(1.1067)">(C5)</span>
<span class="t b" style="left:65.1px;top:502px;transform:scaleX(1.0387)">Current Pending Sector</span>
<span class="t" style="left:356.15px;top:502px;transform:scaleX(0.7831)">0</span>
<span class="t" style="left:547px;top:502px;transform:scaleX(0.9053)">100</span>
<span class="t" style="left:601.9px;top:502px;transform:scaleX(0.9053)">100</span>
<span class="t" style="left:657.45px;top:502px;transform:scaleX(0.7831)">0</span>
<span class="t" style="left:726.95px;top:502px;transform:scaleX(0.7831)">0</span>
<span class="t" style="left:807.43px;top:502px;transform:scaleX(0.8707)">Ok</span>
<span class="t b" style="left:33.44px;top:522px;transform:scaleX(1.1067)">(C6)</span>
<span class="t b" style="left:65.11px;top:522px;transform:scaleX(1.0277)">Offline Uncorrectable</span>
<span class="t" style="left:356.15px;top:522px;transform:scaleX(0.7831)">0</span>
<span class="t" style="left:547px;top:522px;transform:scaleX(0.9053)">100</span>
<span class="t" style="left:601.9px;top:522px;transform:scaleX(0.9053)">100</span>
<span class="t" style="left:657.45px;top:522px;transform:scaleX(0.7831)">0</span>
<span class="t" style="left:726.95px;top:522px;transform:scaleX(0.7831)">0</span>
<span class="t" style="left:807.43px;top:522px;transform:scaleX(0.8707)">Ok</span>
<span class="t b" style="left:33.44px;top:542px;transform:scaleX(1.1067)">(C7)</span>
<span class="t b" style="left:65.44px;top:542px;transform:scaleX(1.0376)">Interface CRC Error Count</span>
<span class="t" style="left:356.15px;top:542px;transform:scaleX(0.7831)">0</span>
<span class="t" style="left:547.48px;top:542px;transform:scaleX(0.9109)">200</span>
<span class="t" style="left:602.38px;top:542px;transform:scaleX(0.9109)">200</span>
<span class="t" style="left:657.45px;top:542px;transform:scaleX(0.7831)">0</span>
<span class="t" style="left:726.95px;top:542px;transform:scaleX(0.7831)">0</span>
<span class="t" style="left:807.43px;top:542px;transform:scaleX(0.8707)">Ok</span>
<span class="t b" style="left:33.45px;top:562px;transform:scaleX(1.0925)">(F0)</span>
<span class="t b" style="left:62.97px;top:562px;transform:scaleX(1.0016)">Head Flying Hours</span>
<span class="t" style="left:356.05px;top:562px;transform:scaleX(0.9560)">197534135897317</span>
<span class="t" style="left:547px;top:562px;transform:scaleX(0.9053)">100</span>
<span class="t" style="left:602.38px;top:562px;transform:scaleX(0.9142)">253</span>
<span class="t" style="left:657.45px;top:562px;transform:scaleX(0.7831)">0</span>
<span class="t" style="left:727.42px;top:562px;transform:scaleX(0.9923)">19753413...</span>
<span class="t" style="left:807.43px;top:562px;transform:scaleX(0.8707)">Ok</span>
<span class="t b" style="left:33.45px;top:582px;transform:scaleX(1.0925)">(F1)</span>
<span class="t b" style="left:62.99px;top:582px;transform:scaleX(1.0632)">Unknown Attribute</span>
<span class="t" style="left:356.08px;top:582px;transform:scaleX(0.9276)">1088289056 GB</span>
<span class="t" style="left:547px;top:582px;transform:scaleX(0.9053)">100</span>
<span class="t" style="left:602.38px;top:582px;transform:scaleX(0.9142)">253</span>
<span class="t" style="left:657.45px;top:582px;transform:scaleX(0.7831)">0</span>
<span class="t" style="left:727.42px;top:582px;transform:scaleX(0.9923)">10882890...</span>
<span class="t" style="left:807.43px;top:582px;transform:scaleX(0.8707)">Ok</span>
<span class="t b" style="left:33.45px;top:602px;transform:scaleX(1.0925)">(F2)</span>
<span class="t b" style="left:62.99px;top:602px;transform:scaleX(1.0632)">Unknown Attribute</span>
<span class="t" style="left:356.08px;top:602px;transform:scaleX(0.9276)">1856365399 GB</span>
<span class="t" style="left:547px;top:602px;transform:scaleX(0.9053)">100</span>
<span class="t" style="left:602.38px;top:602px;transform:scaleX(0.9142)">253</span>
<span class="t" style="left:657.45px;top:602px;transform:scaleX(0.7831)">0</span>
<span class="t" style="left:727.42px;top:602px;transform:scaleX(0.9923)">18563653...</span>
<span class="t" style="left:807.43px;top:602px;transform:scaleX(0.8707)">Ok</span>
<span class="t" style="left:25.1px;top:713px;transform:scaleX(0.9828)">Health Status</span>
<span class="t b" style="left:132.09px;top:713px;transform:scaleX(0.8930);color:#00c000">Ok</span>
<span class="t" style="left:737.33px;top:713px;transform:scaleX(1.0409)">4:49</span>
<span class="t" style="left:810.04px;top:711px;transform:scaleX(0.9545)">Update</span>
<span class="t" style="left:928.25px;top:711px;transform:scaleX(0.9257)">Log</span>
<span class="t" style="left:37.9px;top:800px;transform:scaleX(1.0634)">[17:08...</span>
<span class="t" style="left:128.33px;top:800px;transform:scaleX(0.9264)">WD Blue SN570 500GB</span>
<span class="t" style="left:281.19px;top:800px;transform:scaleX(0.9673)">selected</span>
<span class="t" style="left:37.9px;top:820px;transform:scaleX(1.0634)">[17:08...</span>
<span class="t" style="left:128.4px;top:820px;transform:scaleX(0.9420)">ST500DM002-1BD142</span>
<span class="t" style="left:255.9px;top:820px;transform:scaleX(0.9545)">selected</span>
</body></html>
